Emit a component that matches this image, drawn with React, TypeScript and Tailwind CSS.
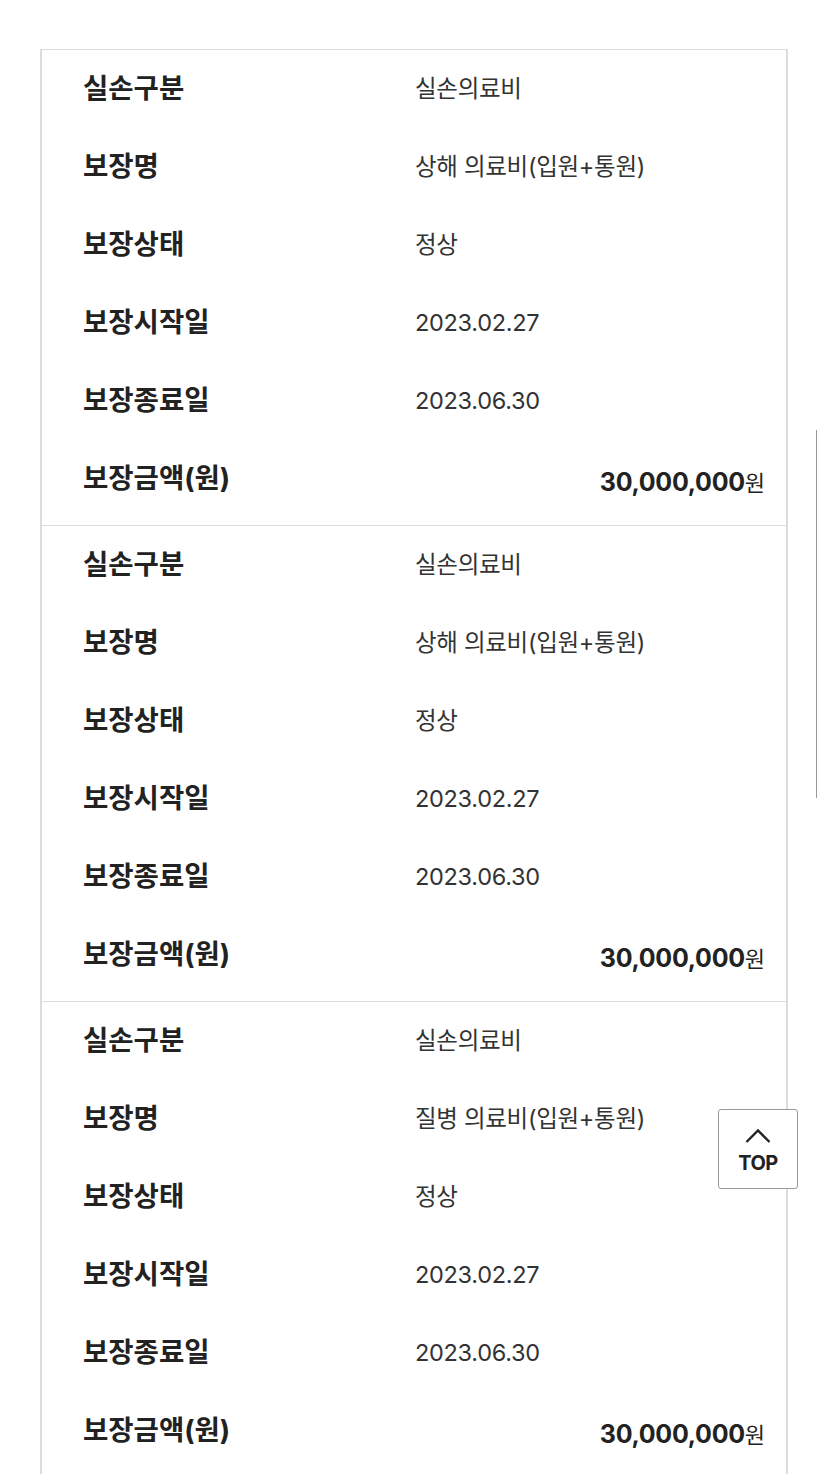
type Coverage = {
  category: string;
  name: string;
  status: string;
  startDate: string;
  endDate: string;
  amount: string;
};

const coverages: Coverage[] = [
  { category: '실손의료비', name: '상해 의료비(입원+통원)', status: '정상', startDate: '2023.02.27', endDate: '2023.06.30', amount: '30,000,000' },
  { category: '실손의료비', name: '상해 의료비(입원+통원)', status: '정상', startDate: '2023.02.27', endDate: '2023.06.30', amount: '30,000,000' },
  { category: '실손의료비', name: '질병 의료비(입원+통원)', status: '정상', startDate: '2023.02.27', endDate: '2023.06.30', amount: '30,000,000' },
];

const font = "font-['Inter','Noto_Sans_CJK_KR',sans-serif]";

const Row = ({ label, children }: { label: string; children: React.ReactNode }) => (
  <div className="flex h-[78px] items-center">
    <div className="w-[332px] shrink-0 text-[27.5px] font-bold text-[#222]">{label}</div>
    <div className="flex-1 text-[23.5px] tracking-[-0.3px] text-[#333]">{children}</div>
  </div>
);

const CoverageCard = ({ item }: { item: Coverage }) => (
  <div className="border-t border-[#dcdcdc] pb-[7px] pl-[41px] pr-[21px]">
    <Row label="실손구분">{item.category}</Row>
    <Row label="보장명">{item.name}</Row>
    <Row label="보장상태">{item.status}</Row>
    <Row label="보장시작일">{item.startDate}</Row>
    <Row label="보장종료일">{item.endDate}</Row>
    <div className="flex h-[78px] items-center justify-between">
      <div className="text-[27.5px] font-bold text-[#222]">보장금액(원)</div>
      <div className="flex items-baseline pt-2 text-[#222]">
        <span className="text-[25px] font-bold tracking-[-0.3px]">{item.amount}</span>
        <span className="text-[22px]">원</span>
      </div>
    </div>
  </div>
);

const App = () => {
  return (
    <div className={`relative min-h-[1474px] bg-white ${font}`}>
      <div className="pl-[40px] pr-[29px] pt-[49px]">
        <div className="border-x-2 border-[#dcdcdc]">
          {coverages.map((item, i) => (
            <CoverageCard key={i} item={item} />
          ))}
        </div>
      </div>

      {/* scroll indicator */}
      <div className="absolute right-0 top-[430px] h-[368px] w-px bg-[#999]" />

      <button className="absolute left-[718px] top-[1109px] flex h-[80px] w-[80px] flex-col items-center rounded-[3px] border border-[#999] bg-white pt-[18px]">
        <svg width="26" height="15" viewBox="0 0 26 15" fill="none" stroke="#222" strokeWidth="2.4">
          <polyline points="1.5,14 13,2.5 24.5,14" />
        </svg>
        <span className="mt-[10px] text-[20px] font-bold leading-none tracking-[-0.5px] text-[#222]">TOP</span>
      </button>
    </div>
  );
};

export default App;
